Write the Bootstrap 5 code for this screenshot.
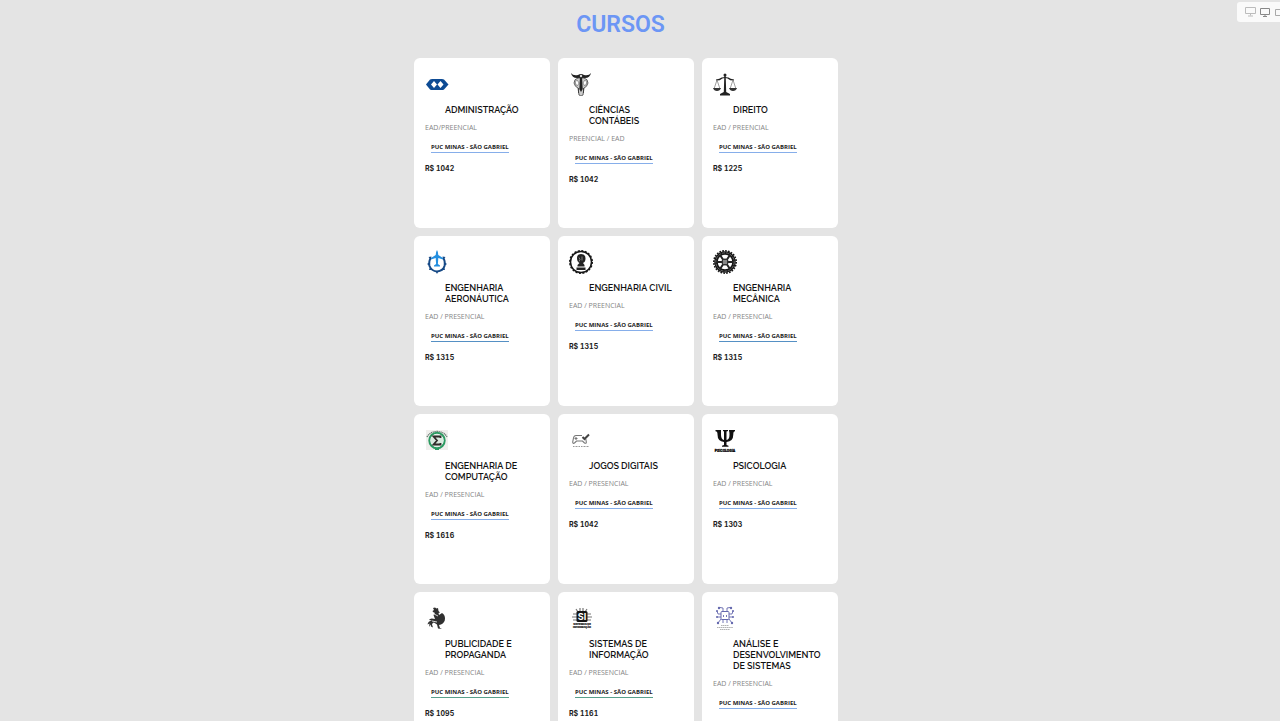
<!DOCTYPE html>
<html lang="pt-BR">
<head>
<meta charset="utf-8">
<meta name="viewport" content="width=device-width, initial-scale=1">
<title>Cursos</title>
<link href="https://cdn.jsdelivr.net/npm/bootstrap@5.3.0/dist/css/bootstrap.min.css" rel="stylesheet">
<style>
  body { background: #e4e4e4; font-family: "Open Sans", sans-serif; color: #222; }
  .page { padding: 8px 28px 0 0; }
  .page-title { font: 600 23px/34px Roboto, sans-serif; color: #6c96f5; margin: 0 0 16px; padding-right: 11px; }
  .courses { display: grid; grid-template-columns: repeat(3, minmax(0, 1fr)); gap: 8px; max-width: 424px; }
  .course { min-height: 170px; padding: 14px 14px 14px 11px; border: 0; border-radius: 6px; align-items: flex-start; }
  .course svg { width: 24px; height: 24px; margin-bottom: 9px; }
  .course h2 { font: 600 9px/11px Raleway, Inter, sans-serif; color: #111; margin: 0 0 7px 20px; }
  .mode { font-size: 7px; line-height: 10px; color: #858585; margin: 0 0 10px; }
  .campus { font-size: 6px; line-height: 9px; font-weight: 700; color: #222; text-decoration: none; border-bottom: 1px solid #86aeea; margin: 0 0 11px 6px; }
  .campus.deep { border-color: #5590c4; }
  .campus.green { border-color: #57a08c; }
  .price { font: 700 7px/10px Inter, sans-serif; font-variant-numeric: tabular-nums; color: #1c1c1c; margin: 0; }
  .devices { top: 2px; right: 0; width: 43px; height: 20px; background: #fafafa; border-radius: 3px 0 0 3px; overflow: hidden; }
  .devices button { border: 0; padding: 0; background: none; flex: none; line-height: 0; }
</style>
</head>
<body class="vh-100 overflow-hidden">
<main class="page">
  <h1 class="page-title text-center">CURSOS</h1>
  <div class="courses mx-auto">

    <article class="card course">
      <svg viewBox="0 0 24 24" aria-hidden="true"><path fill="#0d4b94" d="M1 12.500 5 7.500Q6 7 7 7h10q1 0 2 .5l4.500 5-4.500 5Q18 18 17 18H7q-1 0-2-.5z"/><path fill="#fff" d="m9 9 3 3.500L9 16l-3-3.500zm6.500 0 3 3.500-3 3.500-3-3.500z"/></svg>
      <h2>ADMINISTRAÇÃO</h2>
      <p class="mode">EAD/PREENCIAL</p>
      <a class="campus" href="#">PUC MINAS - SÃO GABRIEL</a>
      <p class="price">R$ 1042</p>
    </article>

    <article class="card course">
      <svg viewBox="0 0 24 24" aria-hidden="true"><path fill="#222" d="M2 1q2 3 7 2 3-2 6 0 5 1 7-2-1 5-6 5l-2 1h-4L8 6Q3 6 2 1z"/><path fill="#ccc" stroke="#444" stroke-width=".8" d="M9 6Q5 7 5 11q1 4 4 5l1 7 2 1 2-1 1-7q3-1 4-5 0-4-4-5z"/><path fill="#fff" stroke="#555" stroke-width=".6" d="M6 9q3-2 4 2-1 4-3 2zm12 0q-3-2-4 2 1 4 3 2z"/><path fill="#222" d="M11 5h2l.7 12-1.700 3-1.700-3z"/><path fill="none" stroke="#333" stroke-width=".8" d="M9.500 16v5m5-5v5"/><circle cx="12" cy="4" r="1.200" fill="#ddd"/></svg>
      <h2>CIÊNCIAS CONTÁBEIS</h2>
      <p class="mode">PREENCIAL / EAD</p>
      <a class="campus" href="#">PUC MINAS - SÃO GABRIEL</a>
      <p class="price">R$ 1042</p>
    </article>

    <article class="card course">
      <svg viewBox="0 0 24 24" aria-hidden="true"><path fill="#222" d="M11.300 4h1.400l.5 16 3.800 2v1.500H7V22l3.800-2z"/><circle cx="12" cy="3" r="1.500" fill="#222"/><path fill="none" stroke="#222" stroke-width="1.200" d="M3 8q4 0 6-2 3-1 6 0 2 2 6 2"/><path fill="none" stroke="#777" stroke-width=".7" d="M4 8 1 17m3-9 3 9M20 8l-3 9m3-9 3 9"/><path fill="#333" d="M0 16h8q-1 3-4 3t-4-3zm16 0h8q-1 3-4 3t-4-3z"/></svg>
      <h2>DIREITO</h2>
      <p class="mode">EAD / PREENCIAL</p>
      <a class="campus" href="#">PUC MINAS - SÃO GABRIEL</a>
      <p class="price">R$ 1225</p>
    </article>

    <article class="card course">
      <svg viewBox="0 0 24 24" aria-hidden="true"><path fill="none" stroke="#174a86" stroke-width="2" d="M6 7.500Q3.500 11 4.500 16q2 5 7.500 5.500 6-.5 7.500-5.500 1-5-1.500-8.500"/><path fill="#174a86" d="m2 14 3-2v4zm20 0-3-2v4zM10.500 21h3L12 24zM3.500 7l3-.5-1 3zm17 0-3-.5 1 3zM4 20l1-3 3 3zm16 0-1-3-3 3z"/><path fill="#238fe0" d="M12 0q1.300 2 1.300 5L18 8v1.500l-4.700-1.500-.4 6 2.100 1.500v1H9v-1l2.100-1.500-.4-6L6 9.500V8l4.700-3q0-3 1.300-5z"/></svg>
      <h2>ENGENHARIA AERONÁUTICA</h2>
      <p class="mode">EAD / PRESENCIAL</p>
      <a class="campus deep" href="#">PUC MINAS - SÃO GABRIEL</a>
      <p class="price">R$ 1315</p>
    </article>

    <article class="card course">
      <svg viewBox="0 0 24 24" aria-hidden="true"><circle cx="12" cy="12" r="10.500" fill="none" stroke="#161616" stroke-width="1.500"/><circle cx="12" cy="12" r="11.300" fill="none" stroke="#161616" stroke-width="1.400" stroke-dasharray="2 1.550"/><path fill="#222" d="M8 8q0-4 4-4 4.500 0 4.500 4.500Q16.500 12 14 13l1.500 2v1.500h-7V15l2-2q-2.500-1-2.500-5zM7.500 17.500h9V20h-9z"/><path fill="none" stroke="#999" stroke-width=".8" d="M10 7.500q2 2 0 4m3-5v4"/></svg>
      <h2>ENGENHARIA CIVIL</h2>
      <p class="mode">EAD / PREENCIAL</p>
      <a class="campus" href="#">PUC MINAS - SÃO GABRIEL</a>
      <p class="price">R$ 1315</p>
    </article>

    <article class="card course">
      <svg viewBox="0 0 24 24" aria-hidden="true"><circle cx="12" cy="12" r="9" fill="none" stroke="#161616" stroke-width="3.500"/><circle cx="12" cy="12" r="11.200" fill="none" stroke="#161616" stroke-width="1.600" stroke-dasharray="1.700 1.220"/><circle cx="12" cy="12" r="9.200" fill="none" stroke="#999" stroke-width=".6" stroke-dasharray="3 1"/><path stroke="#222" stroke-width="2" d="m7 5 4 6m6-6-4 6M7 19l4-6m6 6-4-6M4 12h16"/><circle cx="12" cy="12" r="3.500" fill="#333"/><path stroke="#ddd" d="M10 11h4m-4 2h4"/></svg>
      <h2>ENGENHARIA MECÂNICA</h2>
      <p class="mode">EAD / PRESENCIAL</p>
      <a class="campus deep" href="#">PUC MINAS - SÃO GABRIEL</a>
      <p class="price">R$ 1315</p>
    </article>

    <article class="card course">
      <svg viewBox="0 0 24 24" aria-hidden="true"><path fill="#f0efed" d="M1 2h22v20H1z"/><path fill="none" stroke="#667b70" stroke-width="1.300" stroke-dasharray="1.300 .6" d="M2 9Q5 3.500 12 3.500T22 9"/><circle cx="12" cy="12.500" r="7.700" fill="#fff" stroke="#2c9b62" stroke-width="2"/><circle cx="12" cy="12.500" r="6.300" fill="#d9e9df"/><path fill="none" stroke="#302c2a" stroke-width="1.800" d="M15.500 10V8.500H8.500l3.500 4-3.500 4h7V15"/><path stroke="#2c9b62" d="M10 21.500h4"/></svg>
      <h2>ENGENHARIA DE COMPUTAÇÃO</h2>
      <p class="mode">EAD / PRESENCIAL</p>
      <a class="campus" href="#">PUC MINAS - SÃO GABRIEL</a>
      <p class="price">R$ 1616</p>
    </article>

    <article class="card course">
      <svg viewBox="0 0 24 24" aria-hidden="true"><path fill="none" stroke="#777" stroke-width="1.100" d="M13 7.500H7Q5 7.500 4.500 10l-.8 4q0 2 1.800 1l2-2h6l2 2q2 .8 1.800-1l-.5-3M7 9v3m-1.500-1.500h3"/><path fill="none" stroke="#444" stroke-width="2" d="m13.500 9 2 2 4.500-4.500"/><path stroke="#999" stroke-width="1.200" stroke-dasharray="1 .5" d="M4 18.500h7m1 0h8"/></svg>
      <h2>JOGOS DIGITAIS</h2>
      <p class="mode">EAD / PRESENCIAL</p>
      <a class="campus" href="#">PUC MINAS - SÃO GABRIEL</a>
      <p class="price">R$ 1042</p>
    </article>

    <article class="card course">
      <svg viewBox="0 0 24 24" aria-hidden="true"><path fill="#111" d="M10 2h5v1l-1.500.5V12q3-.5 3-5.500 0-3-.5-3.500V2h6v1.200q-1.700 0-1.700 3.300 0 7-6.800 7.500v3l2 .7v1H9v-1l2-.7v-3Q4.500 13.500 4.500 6.500q0-3.300-2-3.300V2H8q0 5 0 5 .2 4.500 3 5V3.500L10 3z"/><text x="12" y="23.500" text-anchor="middle" font-family="Roboto, sans-serif" font-size="3.500" font-weight="900" fill="#111" stroke="#111" stroke-width=".3">PSICOLOGIA</text></svg>
      <h2>PSICOLOGIA</h2>
      <p class="mode">EAD / PRESENCIAL</p>
      <a class="campus" href="#">PUC MINAS - SÃO GABRIEL</a>
      <p class="price">R$ 1303</p>
    </article>

    <article class="card course">
      <svg viewBox="0 0 24 24" aria-hidden="true"><path fill="#303030" d="m8 2 2-.5 1.500 1L13 2l.5 3 1.500 1.500-1.500.5L14 9l3-2q3 1.500 3 5.500t-4 6l-2 .5 1 3 2 1-4-.5-1-4-3-2q-1.500 0-2 2l1 3-2-1-.5-2L4 21l.5-3.500-2 1Q3 15 7 14.500L4 14q1-2.500 6-1L8.500 9 10 7 8 6l-.5-1L9 4z"/><path fill="none" stroke="#fff" stroke-width=".8" d="m9 8 4 2m-6 5 5 1"/></svg>
      <h2>PUBLICIDADE E PROPAGANDA</h2>
      <p class="mode">EAD / PRESENCIAL</p>
      <a class="campus green" href="#">PUC MINAS - SÃO GABRIEL</a>
      <p class="price">R$ 1095</p>
    </article>

    <article class="card course">
      <svg viewBox="0 0 24 24" aria-hidden="true"><path fill="none" stroke="#777" stroke-width="1.200" d="M11 6V2m3 4V2M9 6 7 3m9 3 2-3M8 8H4m4 3H3m5 3H4m13-6h5m-5 3h6m-6 3h5"/><rect x="7.500" y="5" width="11" height="11" rx="1.500" fill="#151515"/><text x="13" y="13.800" text-anchor="middle" font-family="Inter, sans-serif" font-size="9" font-weight="700" fill="#fff">SI</text><g font-family="Inter, sans-serif" font-size="2.600" font-weight="800" fill="#222" stroke="#333" stroke-width=".2" text-anchor="middle"><text x="13" y="19">SISTEMAS DE</text><text x="13" y="21.800">INFORMAÇÃO</text></g></svg>
      <h2>SISTEMAS DE INFORMAÇÃO</h2>
      <p class="mode">EAD / PRESENCIAL</p>
      <a class="campus green" href="#">PUC MINAS - SÃO GABRIEL</a>
      <p class="price">R$ 1161</p>
    </article>

    <article class="card course">
      <svg viewBox="0 0 24 24" aria-hidden="true"><g fill="none" stroke="#6468ae"><rect x="8" y="5.500" width="8" height="8" rx="1"/><path stroke-width=".9" d="M10 5.500V2L7 1.500m7 4V2l3-.5M8 8H5L4 5m4 6H4m4 2-3 4m11-9h3l1-3m-4 6h4m-4 2 3 4m-9-3v3m4-3v3m-3-8-1 1 1 1m2-2 1 1-1 1"/></g><g fill="#6468ae"><circle cx="6" cy="2" r="1.200"/><circle cx="18" cy="2" r="1.200"/><circle cx="4" cy="5" r="1"/><circle cx="20" cy="5" r="1"/><circle cx="4" cy="11" r="1"/><circle cx="20" cy="11" r="1"/><circle cx="5" cy="17" r="1.200"/><circle cx="19" cy="17" r="1.200"/></g><path fill="none" stroke="#aaa" stroke-width=".9" stroke-dasharray="1.500 .4" d="M8 19.500h8M4 21.500h16M7 23.500h10"/></svg>
      <h2>ANÁLISE E DESENVOLVIMENTO DE SISTEMAS</h2>
      <p class="mode">EAD / PRESENCIAL</p>
      <a class="campus" href="#">PUC MINAS - SÃO GABRIEL</a>
    </article>
  </div>
</main>

<div class="devices position-absolute d-flex align-items-center gap-1 ps-2">
  <button type="button" aria-label="Tela grande"><svg width="11" height="10" viewBox="0 0 11 10" fill="none" stroke="#bcbcbc"><path d="M.5.5h10v6H.5zM5.500 6.500v2M3 9h5"/></svg></button>
  <button type="button" aria-label="Computador"><svg width="11" height="10" viewBox="0 0 11 10" fill="none" stroke="#888"><path d="M.5 1.500h9v6h-9zM5 7.500v2M3 9.500h4"/></svg></button>
  <button type="button" aria-label="Tablet"><svg width="11" height="10" viewBox="0 0 11 10" fill="none" stroke="#aaa"><path d="M.5 2.500h9v6h-9z"/></svg></button>
</div>
<script src="https://cdn.jsdelivr.net/npm/bootstrap@5.3.0/dist/js/bootstrap.bundle.min.js"></script>
</body>
</html>
